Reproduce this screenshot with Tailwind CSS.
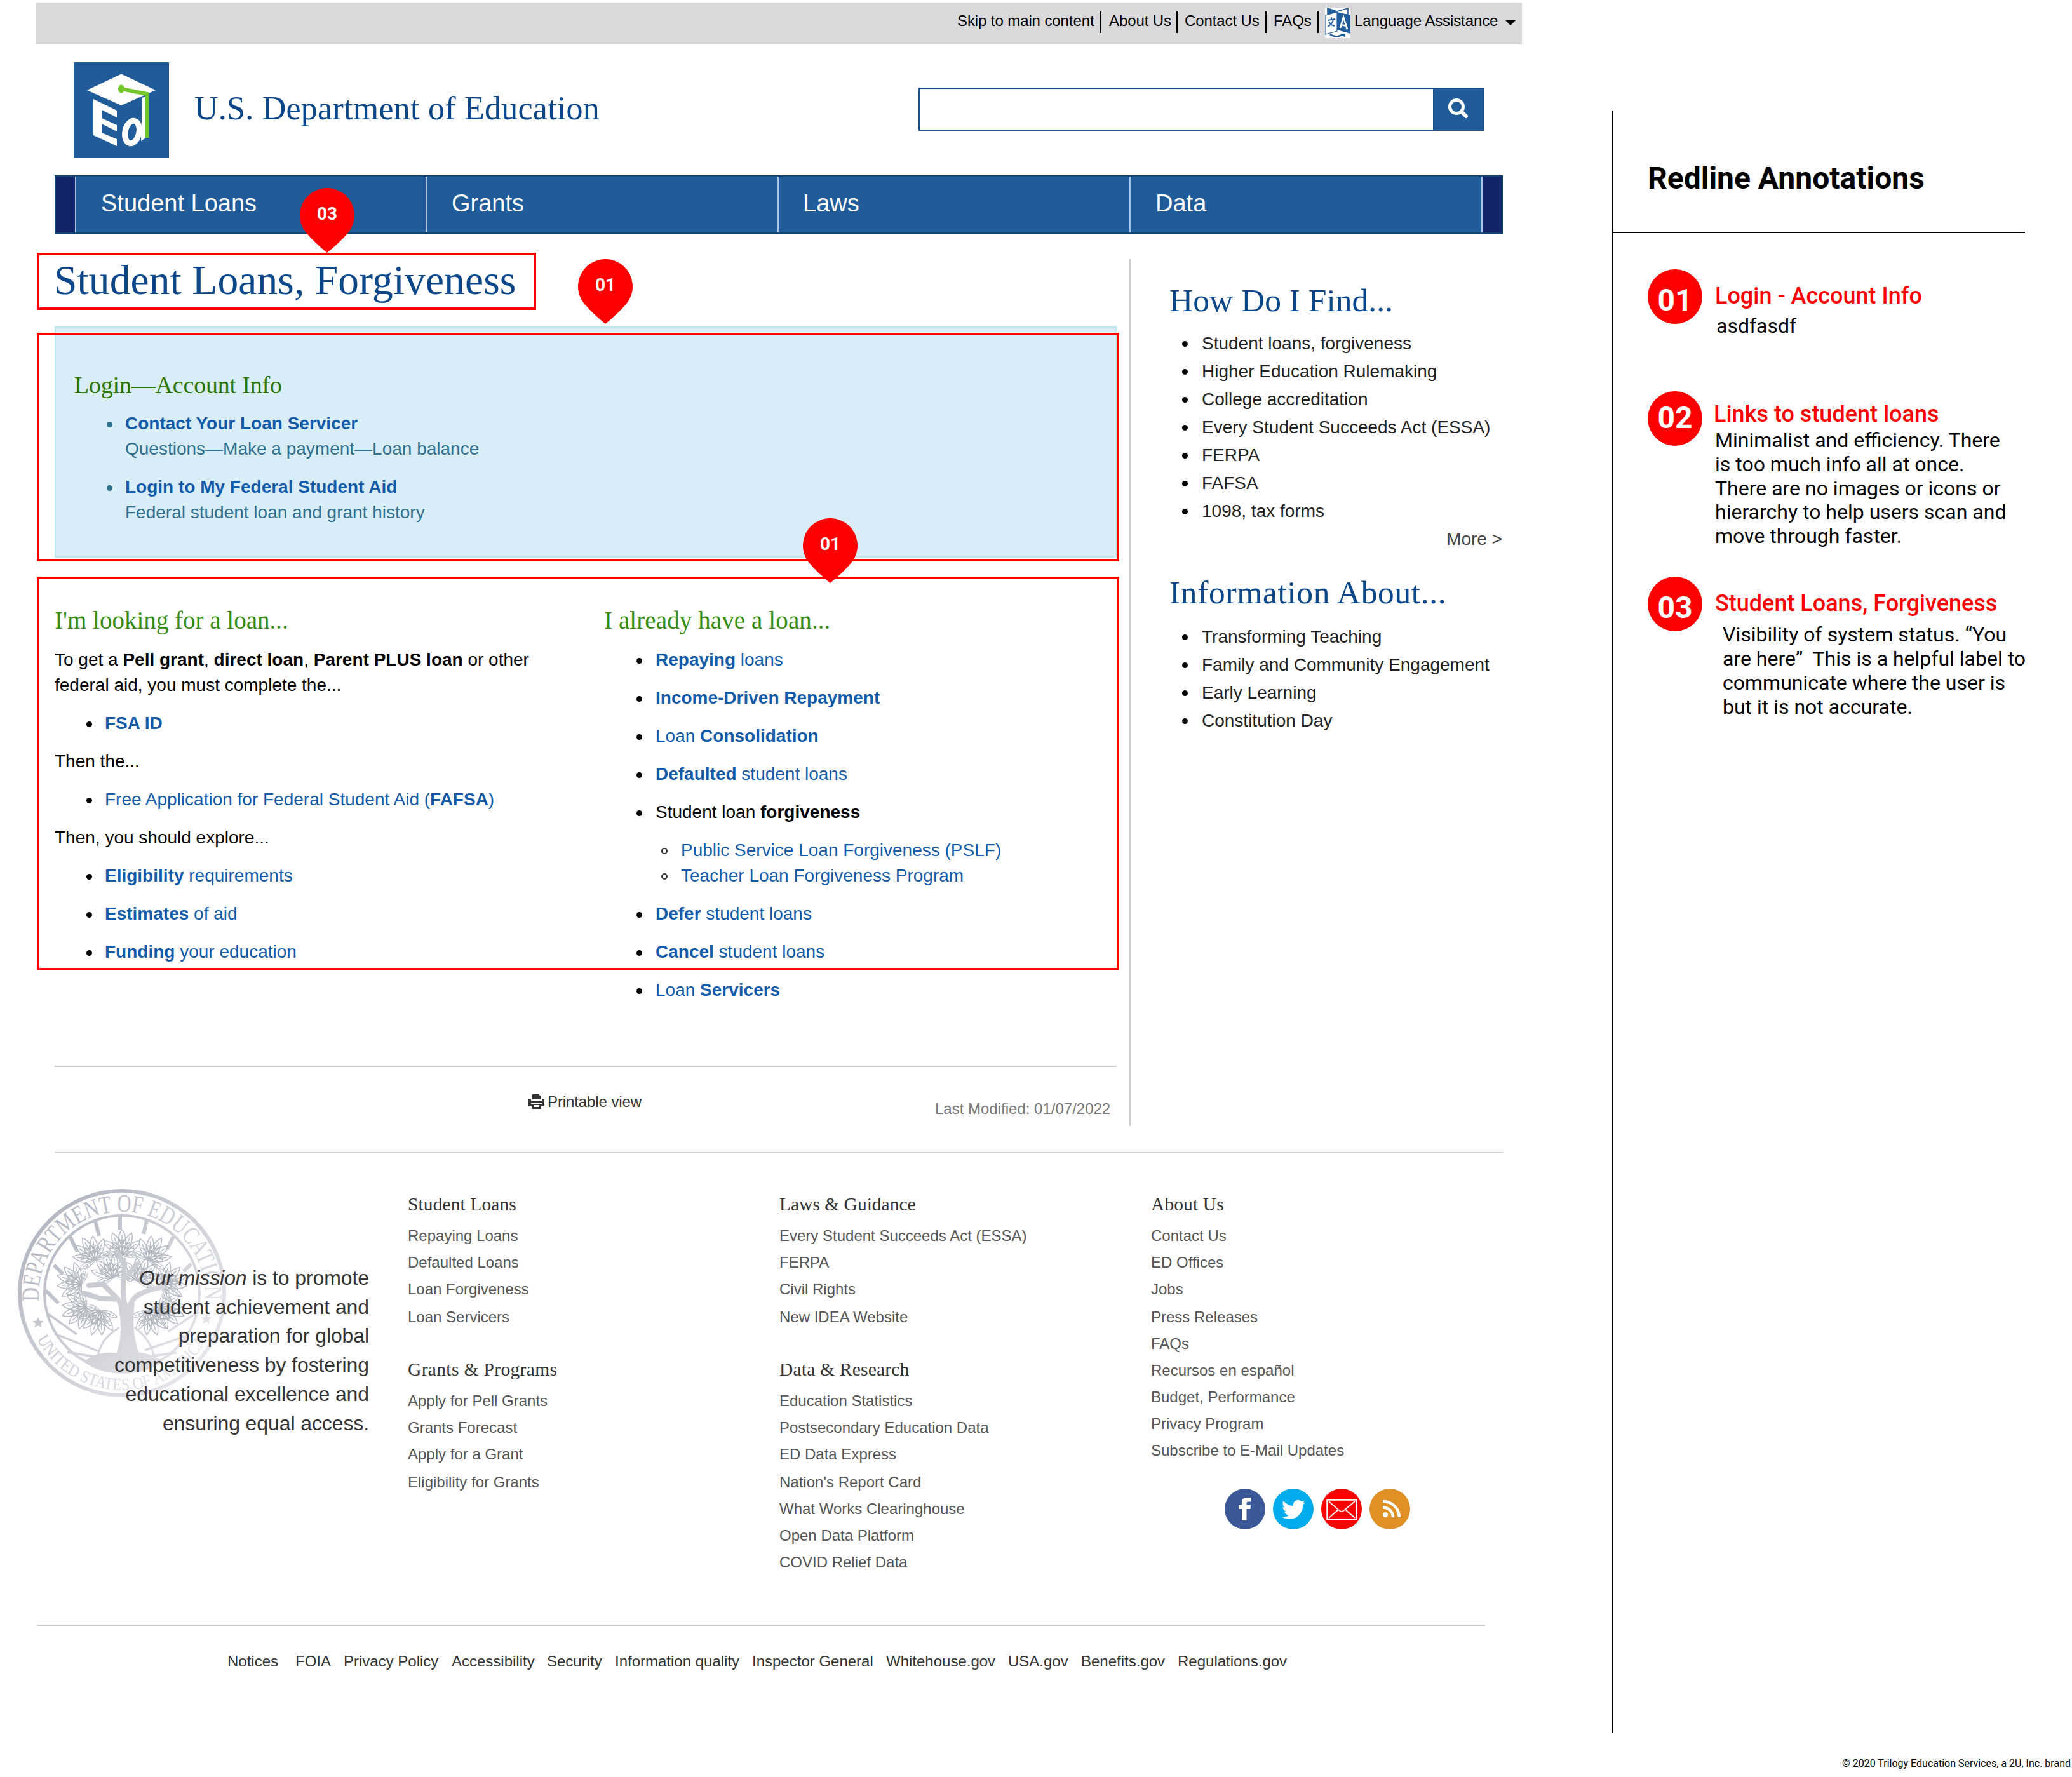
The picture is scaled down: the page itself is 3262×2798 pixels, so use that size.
<!DOCTYPE html>
<html lang="en">
<head>
<meta charset="utf-8">
<title>U.S. Department of Education</title>
<script src="https://cdn.jsdelivr.net/npm/@tailwindcss/browser@4"></script>
</head>
<body class="relative w-[3262px] h-[2798px] overflow-hidden bg-white font-['Liberation_Sans',Arial,sans-serif] text-black">
<div class="flex">
<div class="w-[2420px] shrink-0 pt-1">

  <div class="ml-14 w-[2340px] h-[66px] bg-[#d9d9db] flex items-start text-[24px] leading-[34px] tracking-[-0.1px] pl-[1451px] whitespace-nowrap">
    <a class="mt-3 w-[225px]">Skip to main content</a><span class="mt-[14px] mr-3 w-0.5 h-[34px] bg-black"></span>
    <a class="mt-3 w-[106px]">About Us</a><span class="mt-[14px] mr-[11px] w-0.5 h-[34px] bg-black"></span>
    <a class="mt-3 w-[127px]">Contact Us</a><span class="mt-[14px] mr-[11px] w-0.5 h-[34px] bg-black"></span>
    <a class="mt-3 w-[69px]">FAQs</a><span class="mt-[14px] mr-[10px] w-0.5 h-[34px] bg-black"></span>
    <svg class="mt-2 w-10 h-12 shrink-0" viewBox="0 0 40 48"><rect width="40" height="48" fill="#fff"/><path d="M4 1l15 5 17-5v10H4z" fill="#fff" stroke="#205c9a" stroke-width="1.6"/><path d="M4 1l14 5-6 5H4z" fill="#205c9a"/><path d="M1 12L19 7v30L1 42z" fill="#fff" stroke="#205c9a" stroke-width="1.2"/><path d="M19 7l21 5v29l-21-6z" fill="#205c9a"/><path d="M4 20l12-2M10 15v4M13 19Q11 27 4 30M6 22q3 6 9 7" fill="none" stroke="#205c9a" stroke-width="1.8"/><path d="M24 32l5-17 6 19M26 27l8 2" fill="none" stroke="#fff" stroke-width="2.6"/><path d="M8 42q10 7 20 0" fill="none" stroke="#205c9a" stroke-width="2.6"/><path d="M23 41h9v6z" fill="#205c9a"/></svg>
    <a class="mt-3 ml-[6px] w-[238px]">Language Assistance</a>
    <svg class="mt-7 w-4 h-2" viewBox="0 0 16 8"><path d="M0 0h16L8 8z"/></svg>
  </div>

  <header class="h-[206px] pl-[116px] pt-7 flex items-start">
    <svg class="size-[150px] shrink-0" viewBox="0 0 150 150"><rect width="150" height="150" fill="#205c9a"/><path d="M21 44L75 18.5 129 44 75 68z" fill="#fff"/><path d="M31 58L68 76V87L44 75V88L68 99V109L44 97V111L68 121V132L31 115z" fill="#fff"/><ellipse cx="92" cy="110" rx="11" ry="18" fill="none" stroke="#fff" stroke-width="9" transform="rotate(12 92 110)"/><path d="M108 56L112 54V120L106 124z" fill="#fff"/><path d="M75 42L115.5 50V119" fill="none" stroke="#73c52c" stroke-width="6"/><ellipse cx="75" cy="42" rx="5" ry="6.5" fill="#73c52c"/></svg>
    <div class="ml-[40px] mt-11 w-[1140px] font-['Liberation_Serif',serif] text-[52px] leading-[58px] tracking-[0.25px] text-[#0b4788]">U.S. Department of Education</div>
    <div class="mt-10 flex h-[68px] w-[890px] border-2 border-[#1d5087]">
      <div class="w-[808px] shrink-0 border-t-2 border-[#eee]"></div>
      <div class="flex-1 border-l-2 border-[#1d5087] bg-[#205c9a]"><svg class="size-full" viewBox="0 0 76 64"><circle cx="35" cy="28" r="10.5" fill="none" stroke="#fff" stroke-width="5"/><path d="M43 36l7 7" stroke="#fff" stroke-width="6" stroke-linecap="round"/></svg></div>
    </div>
  </header>

  <nav class="ml-[86px] w-[2280px] h-[92px] border-2 border-[#14446f] bg-[#205c9a] flex text-white text-[38px] leading-[46px]">
    <div class="w-[32px] bg-[#12256b] border-r-2 border-[#a9c4de]"></div>
    <div class="w-[552px] border-r-2 border-[#a9c4de] pl-[39px] pt-[19px]">Student Loans</div>
    <div class="w-[554px] border-r-2 border-[#a9c4de] pl-[39px] pt-[19px]">Grants</div>
    <div class="w-[554px] border-r-2 border-[#a9c4de] pl-[38px] pt-[19px]">Laws</div>
    <div class="w-[554px] border-r-2 border-[#a9c4de] pl-[39px] pt-[19px]">Data</div>
    <div class="w-[30px] bg-[#12256b]"></div>
  </nav>

  <div class="flex h-[1446px] pl-[86px]">
    <main class="w-[1672px] pt-[37px] text-[28px] leading-[40px]">
      <h1 class="-ml-px font-['Liberation_Serif',serif] text-[65.5px] leading-[72px] tracking-[0.1px] text-[#0b4788]">Student Loans, Forgiveness</h1>
      <section class="mt-[37px] h-[364px] border-2 border-[#bce8f1] bg-[#d9edf7] pl-[29px] pt-[70px] text-[#31708f]">
        <h3 class="font-['Liberation_Serif',serif] text-[38px] leading-[40px] tracking-[-0.2px] text-[#2b7500]">Login—Account Info</h3>
        <ul class="mt-[21px] pl-[51px] flex flex-col gap-5">
          <li class="flex gap-5"><i class="mt-[17px] size-[9px] rounded-full bg-[#31708f]"></i><div><b class="text-[#135ba8]">Contact Your Loan Servicer</b><br>Questions—Make a payment—Loan balance</div></li>
          <li class="flex gap-5"><i class="mt-[17px] size-[9px] rounded-full bg-[#31708f]"></i><div><b class="text-[#135ba8]">Login to My Federal Student Aid</b><br>Federal student loan and grant history</div></li>
        </ul>
      </section>
      <div class="mt-[79px] h-[721px] grid grid-cols-[866px_1fr]">
        <div>
          <h3 class="font-['Liberation_Serif',serif] text-[39px] leading-[40px] text-[#388c12]">I'm looking for a loan...</h3>
          <p class="mt-[22px]">To get a <b>Pell grant</b>, <b>direct loan</b>, <b>Parent PLUS loan</b> or other<br>federal aid, you must complete the...</p>
          <ul class="mt-5 pl-[50px] text-[#135ba8]"><li class="flex gap-5"><i class="mt-[17px] size-[9px] rounded-full bg-black"></i><b>FSA ID</b></li></ul>
          <p class="mt-5">Then the...</p>
          <ul class="mt-5 pl-[50px] text-[#135ba8]"><li class="flex gap-5"><i class="mt-[17px] size-[9px] rounded-full bg-black"></i><a>Free Application for Federal Student Aid (<b>FAFSA</b>)</a></li></ul>
          <p class="mt-5">Then, you should explore...</p>
          <ul class="mt-5 pl-[50px] flex flex-col gap-5 text-[#135ba8]">
            <li class="flex gap-5"><i class="mt-[17px] size-[9px] rounded-full bg-black"></i><a><b>Eligibility</b> requirements</a></li>
            <li class="flex gap-5"><i class="mt-[17px] size-[9px] rounded-full bg-black"></i><a><b>Estimates</b> of aid</a></li>
            <li class="flex gap-5"><i class="mt-[17px] size-[9px] rounded-full bg-black"></i><a><b>Funding</b> your education</a></li>
          </ul>
        </div>
        <div>
          <h3 class="-ml-px font-['Liberation_Serif',serif] text-[39px] leading-[40px] tracking-[0.1px] text-[#388c12]">I already have a loan...</h3>
          <ul class="mt-[22px] pl-[50px] flex flex-col gap-5 text-[#135ba8]">
            <li class="flex gap-[21px]"><i class="mt-[17px] size-[9px] rounded-full bg-black"></i><a><b>Repaying</b> loans</a></li>
            <li class="flex gap-[21px]"><i class="mt-[17px] size-[9px] rounded-full bg-black"></i><a><b>Income-Driven Repayment</b></a></li>
            <li class="flex gap-[21px]"><i class="mt-[17px] size-[9px] rounded-full bg-black"></i><a>Loan <b>Consolidation</b></a></li>
            <li class="flex gap-[21px]"><i class="mt-[17px] size-[9px] rounded-full bg-black"></i><a><b>Defaulted</b> student loans</a></li>
            <li class="flex gap-[21px]"><i class="mt-[17px] size-[9px] rounded-full bg-black"></i><div><span class="text-black">Student loan <b>forgiveness</b></span>
              <ul class="mt-5 pl-[9px]">
                <li class="flex gap-[21px]"><i class="mt-[16px] size-[10px] rounded-full border-2 border-[#333]"></i><a>Public Service Loan Forgiveness (PSLF)</a></li>
                <li class="flex gap-[21px]"><i class="mt-[16px] size-[10px] rounded-full border-2 border-[#333]"></i><a>Teacher Loan Forgiveness Program</a></li>
              </ul></div></li>
            <li class="flex gap-[21px]"><i class="mt-[17px] size-[9px] rounded-full bg-black"></i><a><b>Defer</b> student loans</a></li>
            <li class="flex gap-[21px]"><i class="mt-[17px] size-[9px] rounded-full bg-black"></i><a><b>Cancel</b> student loans</a></li>
            <li class="flex gap-[21px]"><i class="mt-[17px] size-[9px] rounded-full bg-black"></i><a>Loan <b>Servicers</b></a></li>
          </ul>
        </div>
      </div>
      <div class="border-t-2 border-[#ccc] flex items-start text-[24px] leading-[34px]">
        <svg class="ml-[746px] mt-[42px] w-[25px] h-6" viewBox="0 0 25 24"><path d="M6 9V1h10l3 3v5z" fill="#333"/><path d="M0 8h4v3h17V8h4v11H0z" fill="#333"/><path d="M4 15.500h17" stroke="#fff" stroke-width="1.500"/><path d="M5 17h15v7H5z" fill="#333"/><path d="M8 18h9v3H8z" fill="#fff"/></svg>
        <span class="ml-[5px] mt-[38px] w-[610px] tracking-[-0.1px] text-[#333]">Printable view</span>
        <span class="mt-[49px] text-[#777]">Last Modified: 01/07/2022</span>
      </div>
    </main>
    <aside class="ml-5 mt-10 h-[1365px] w-[588px] border-l-2 border-[#ccc] pl-[61px] pt-[35px] text-[28px] leading-[44px] text-[#222]">
      <h2 class="font-['Liberation_Serif',serif] text-[51.5px] leading-[60px] text-[#0b4788]">How Do I Find...</h2>
      <ul class="mt-4 pl-5">
        <li class="flex gap-[22px]"><i class="mt-[18px] size-[9px] rounded-full bg-black"></i><a>Student loans, forgiveness</a></li>
        <li class="flex gap-[22px]"><i class="mt-[18px] size-[9px] rounded-full bg-black"></i><a>Higher Education Rulemaking</a></li>
        <li class="flex gap-[22px]"><i class="mt-[18px] size-[9px] rounded-full bg-black"></i><a>College accreditation</a></li>
        <li class="flex gap-[22px]"><i class="mt-[18px] size-[9px] rounded-full bg-black"></i><a>Every Student Succeeds Act (ESSA)</a></li>
        <li class="flex gap-[22px]"><i class="mt-[18px] size-[9px] rounded-full bg-black"></i><a>FERPA</a></li>
        <li class="flex gap-[22px]"><i class="mt-[18px] size-[9px] rounded-full bg-black"></i><a>FAFSA</a></li>
        <li class="flex gap-[22px]"><i class="mt-[18px] size-[9px] rounded-full bg-black"></i><a>1098, tax forms</a></li>
      </ul>
      <div class="text-right pr-[1px] text-[#444]">More &gt;</div>
      <h2 class="mt-8 font-['Liberation_Serif',serif] text-[51.5px] leading-[60px] tracking-[0.65px] text-[#0b4788]">Information About...</h2>
      <ul class="mt-[18px] pl-5">
        <li class="flex gap-[22px]"><i class="mt-[18px] size-[9px] rounded-full bg-black"></i><a>Transforming Teaching</a></li>
        <li class="flex gap-[22px]"><i class="mt-[18px] size-[9px] rounded-full bg-black"></i><a>Family and Community Engagement</a></li>
        <li class="flex gap-[22px]"><i class="mt-[18px] size-[9px] rounded-full bg-black"></i><a>Early Learning</a></li>
        <li class="flex gap-[22px]"><i class="mt-[18px] size-[9px] rounded-full bg-black"></i><a>Constitution Day</a></li>
      </ul>
    </aside>
  </div>

  <footer>
    <div class="ml-[86px] w-[2280px] border-t-2 border-[#ccc]"></div>
    <div class="relative h-[742px] flex">
      <svg class="absolute left-[28px] top-[56px] size-[328px]" viewBox="0 0 328 328">
        <defs>
          <linearGradient id="seal" gradientUnits="userSpaceOnUse" x1="30" y1="60" x2="290" y2="290"><stop offset="0" stop-color="#b3b7c2"/><stop offset=".5" stop-color="#cfd0d8"/><stop offset="1" stop-color="#e8e8ed"/></linearGradient>
          <path id="arcTop" d="M33.4 177A131 131 0 1 1 294.6 177"/>
          <path id="arcBottom" d="M24 224A152 152 0 0 0 304 224"/>
          <g id="leaf"><path d="M0 0C-9-14-7-30 0-40 8-30 8-14 0 0M0-4V-32M0-10l-4-6M0-10l4-6M0-19l-4-6M0-19l4-6"/></g>
          <g id="sprig"><use href="#leaf"/><use href="#leaf" transform="rotate(24) scale(.95)"/><use href="#leaf" transform="rotate(-24) scale(.95)"/><use href="#leaf" transform="rotate(52) scale(.9)"/><use href="#leaf" transform="rotate(-52) scale(.9)"/><use href="#leaf" transform="rotate(90) scale(.7)"/><use href="#leaf" transform="rotate(-90) scale(.7)"/></g>
        </defs>
        <g stroke="url(#seal)" fill="none">
          <circle cx="164" cy="164" r="161" stroke-width="6"/>
          <circle cx="164" cy="164" r="122" stroke-width="4"/>
          <g stroke-width="6"><path d="M161 42v22M122 50l6 24M203 50l-5 21M82 75l12 24M245 75l-10 20M57 120l14 14M273 118l-12 12M44 160l20 20"/></g>
          <g stroke-width="3.500"><path d="M45 195l48 34M58 228l70 28M78 257l48 8M282 195l-46 30M270 230l-70 24M250 258l-46 6"/></g>
          <g stroke-width="1.500">
            <use href="#sprig" transform="translate(164 104)"/><use href="#sprig" transform="translate(122 112) rotate(-30)"/><use href="#sprig" transform="translate(206 112) rotate(30)"/>
            <use href="#sprig" transform="translate(100 150) rotate(-70)"/><use href="#sprig" transform="translate(228 150) rotate(70)"/><use href="#sprig" transform="translate(108 186) rotate(-110)"/><use href="#sprig" transform="translate(224 186) rotate(110)"/>
            <use href="#sprig" transform="translate(130 192) rotate(-160)"/><use href="#sprig" transform="translate(206 192) rotate(160)"/><use href="#sprig" transform="translate(150 140) rotate(-20)"/><use href="#sprig" transform="translate(190 146) rotate(20)"/>
          </g>
          <path d="M126 262c6-24 18-34 34-44M214 262c-6-24-18-34-30-44" stroke-width="3"/>
          <g stroke-width="8" stroke-linecap="round"><path d="M166 250c4-34 2-60-8-76L134 150 112 152M158 174l-30-2-24-8M172 200c4-26 14-34 34-40l22-6M168 180c-4-24-2-44 0-60l-12-22M170 140l18-22"/></g>
        </g>
        <g fill="url(#seal)">
          <path d="M154 262c12-28 8-56 4-82h26c-4 30-2 54 8 82z"/>
          <path d="M104 272c20-16 40-16 60-12 24-6 44-2 64 12-30 24-92 26-124 0z"/>
          <path d="M32 202l2.500 5.500 6 .600-4.500 4 1.300 6-5.300-3-5.300 3 1.300-6-4.500-4 6-.600zM297 196l2.500 5.500 6 .600-4.500 4 1.300 6-5.300-3-5.300 3 1.300-6-4.500-4 6-.600z"/>
          <text class="font-['Liberation_Serif',serif] text-[39px]"><textPath href="#arcTop" textLength="430" lengthAdjust="spacingAndGlyphs">DEPARTMENT OF EDUCATION</textPath></text>
          <text class="font-['Liberation_Serif',serif] text-[27px]"><textPath href="#arcBottom" startOffset="14" textLength="326" lengthAdjust="spacingAndGlyphs">UNITED STATES OF AMERICA</textPath></text>
        </g>
      </svg>
      <p class="relative mt-[174px] w-[581px] h-fit text-right text-[32px] leading-[45.7px] tracking-[-0.1px] text-[#333]"><em>Our mission</em> is to promote<br>student achievement and<br>preparation for global<br>competitiveness by fostering<br>educational excellence and<br>ensuring equal access.</p>
      <div class="ml-[61px] mt-16 grid grid-cols-[585px_585px_540px] text-[24px] leading-[42px] text-[#555]">
        <div>
          <h4 class="font-['Liberation_Serif',serif] text-[29.5px] leading-[32px] tracking-[0.1px] text-[#333]">Student Loans</h4>
          <ul class="mt-[13px]"><li>Repaying Loans</li><li>Defaulted Loans</li><li>Loan Forgiveness</li><li class="mt-0.5">Loan Servicers</li></ul>
          <h4 class="mt-[45px] font-['Liberation_Serif',serif] text-[29.5px] leading-[32px] tracking-[0.35px] text-[#333]">Grants &amp; Programs</h4>
          <ul class="mt-[13px]"><li>Apply for Pell Grants</li><li>Grants Forecast</li><li>Apply for a Grant</li><li class="mt-0.5">Eligibility for Grants</li></ul>
        </div>
        <div>
          <h4 class="font-['Liberation_Serif',serif] text-[29.5px] leading-[32px] text-[#333]">Laws &amp; Guidance</h4>
          <ul class="mt-[13px]"><li>Every Student Succeeds Act (ESSA)</li><li>FERPA</li><li>Civil Rights</li><li class="mt-0.5">New IDEA Website</li></ul>
          <h4 class="mt-[45px] font-['Liberation_Serif',serif] text-[29.5px] leading-[32px] tracking-[0.2px] text-[#333]">Data &amp; Research</h4>
          <ul class="mt-[13px]"><li>Education Statistics</li><li>Postsecondary Education Data</li><li>ED Data Express</li><li class="mt-0.5">Nation's Report Card</li><li>What Works Clearinghouse</li><li>Open Data Platform</li><li>COVID Relief Data</li></ul>
        </div>
        <div>
          <h4 class="font-['Liberation_Serif',serif] text-[29.5px] leading-[32px] tracking-[0.1px] text-[#333]">About Us</h4>
          <ul class="mt-[13px]"><li>Contact Us</li><li>ED Offices</li><li>Jobs</li><li class="mt-0.5">Press Releases</li><li>FAQs</li><li>Recursos en español</li><li>Budget, Performance</li><li>Privacy Program</li><li>Subscribe to E-Mail Updates</li></ul>
          <div class="mt-[39px] ml-[116px] flex gap-3">
            <svg class="size-16" viewBox="0 0 64 64"><circle cx="32" cy="32" r="32" fill="#3b5998"/><path d="M27 50V32H22V25.500H27V21C27 16 30 14 35 14H41.500V20.500H37.500C35 20.500 34.500 21.500 34.500 23.500V25.500H41L40.500 32H34.500V50Z" fill="#fff"/></svg>
            <svg class="size-16" viewBox="0 0 64 64"><circle cx="32" cy="32" r="32" fill="#00acee"/><path transform="translate(14 14.500) scale(1.540)" d="M23.953 4.570a10 10 0 01-2.825.775 4.958 4.958 0 002.163-2.723c-.951.555-2.005.959-3.127 1.184a4.920 4.920 0 00-8.384 4.482C7.690 8.095 4.067 6.130 1.640 3.162a4.822 4.822 0 00-.666 2.475c0 1.710.870 3.213 2.188 4.096a4.904 4.904 0 01-2.228-.616v.060a4.923 4.923 0 003.946 4.827 4.996 4.996 0 01-2.212.085 4.936 4.936 0 004.604 3.417 9.867 9.867 0 01-6.102 2.105c-.390 0-.779-.023-1.170-.067a13.995 13.995 0 007.557 2.209c9.053 0 13.998-7.496 13.998-13.985 0-.210 0-.420-.015-.630A9.935 9.935 0 0024 4.590z" fill="#fff"/></svg>
            <svg class="size-16" viewBox="0 0 64 64"><circle cx="32" cy="32" r="32" fill="#f00"/><path d="M9.500 17.500h46v31h-46z" fill="none" stroke="#fff" stroke-width="2.400"/><path d="M12 20l16 14q4 4 8 0L53 20M12 46l15-13M53 46L38 33" fill="none" stroke="#fff" stroke-width="1.700"/></svg>
            <svg class="size-16" viewBox="0 0 64 64"><circle cx="32" cy="32" r="32" fill="#df9126"/><circle cx="25" cy="41" r="4" fill="#fff"/><path d="M21 29.500A15.500 15.500 0 0 1 37 45M21 20A25.500 25.500 0 0 1 47 45" fill="none" stroke="#fff" stroke-width="4.500"/></svg>
          </div>
        </div>
      </div>
    </div>
    <div class="ml-[58px] w-[2280px] border-t-2 border-[#ccc]"></div>
    <div class="mt-10 pl-[358px] flex whitespace-nowrap text-[24px] leading-[32px] text-[#333]">
      <span class="w-[107px]">Notices</span><span class="w-[76px]">FOIA</span><span class="w-[170px]">Privacy Policy</span><span class="w-[150px]">Accessibility</span><span class="w-[107px]">Security</span><span class="w-[216px]">Information quality</span><span class="w-[211px]">Inspector General</span><span class="w-[192px]">Whitehouse.gov</span><span class="w-[115px]">USA.gov</span><span class="w-[152px]">Benefits.gov</span><span>Regulations.gov</span>
    </div>
  </footer>
</div>

<aside class="ml-[118px] mt-[174px] w-[724px] font-['Roboto',sans-serif]">
  <div class="h-[2554px] border-l-2 border-black">
    <div class="h-[193px] w-[648px] border-b-2 border-black pl-[54px] pt-[79px] text-[48px] leading-[56px] font-bold">Redline Annotations</div>
    <div class="mt-[57px] pl-[54px] h-[192px] flex gap-5">
      <div class="size-[86px] shrink-0 rounded-full bg-[#f00] text-white text-[48px] leading-[56px] font-bold text-center pt-[21px]">01</div>
      <div class="pt-[21px]"><h3 class="text-[36px] leading-[42px] font-medium text-[#f00]">Login - Account Info</h3><p class="mt-2 pl-[2px] text-[32px] leading-[37.6px]">asdfasdf</p></div>
    </div>
    <div class="pl-[54px] h-[292px] flex gap-[18px]">
      <div class="size-[86px] shrink-0 rounded-full bg-[#f00] text-white text-[48px] leading-[56px] font-bold text-center pt-[14px]">02</div>
      <div class="pt-[15px]"><h3 class="text-[36px] leading-[42px] font-medium text-[#f00]">Links to student loans</h3><p class="mt-[2px] pl-[2px] text-[32px] leading-[37.8px] whitespace-nowrap">Minimalist and efficiency. There<br>is too much info all at once.<br>There are no images or icons or<br>hierarchy to help users scan and<br>move through faster.</p></div>
    </div>
    <div class="pl-[54px] flex gap-5">
      <div class="size-[86px] shrink-0 rounded-full bg-[#f00] text-white text-[48px] leading-[56px] font-bold text-center pt-[21px]">03</div>
      <div class="pt-[21px]"><h3 class="text-[36px] leading-[42px] font-medium text-[#f00]">Student Loans, Forgiveness</h3><p class="mt-[9px] pl-3 text-[32px] leading-[38px] whitespace-nowrap">Visibility of system status. “You<br>are here”&nbsp; This is a helpful label to<br>communicate where the user is<br>but it is not accurate.</p></div>
    </div>
  </div>
  <div class="mt-[39px] text-right pr-[2px] text-[16px] leading-[20px]">© 2020 Trilogy Education Services, a 2U, Inc. brand</div>
</aside>
</div>

<div class="absolute left-[58px] top-[398px] w-[786px] h-[90px] border-4 border-[#f00]"></div>
<div class="absolute left-[58px] top-[524px] w-[1704px] h-[360px] border-4 border-[#f00]"></div>
<div class="absolute left-[58px] top-[908px] w-[1704px] h-[620px] border-4 border-[#f00]"></div>
<div class="absolute left-[472px] top-[296px] w-[86px] h-[102px] text-white font-['Roboto',sans-serif] font-bold text-[28px] leading-[32px] text-center pt-[25px]"><svg class="absolute inset-0" viewBox="0 0 86 102"><path d="M9 69.300A43 43 0 1 1 77 69.300Q63 86 43 102 23 86 9 69.300z" fill="#f00"/></svg><span class="relative">03</span></div>
<div class="absolute left-[910px] top-[408px] w-[86px] h-[102px] text-white font-['Roboto',sans-serif] font-bold text-[28px] leading-[32px] text-center pt-[25px]"><svg class="absolute inset-0" viewBox="0 0 86 102"><path d="M9 69.300A43 43 0 1 1 77 69.300Q63 86 43 102 23 86 9 69.300z" fill="#f00"/></svg><span class="relative">01</span></div>
<div class="absolute left-[1264px] top-[816px] w-[86px] h-[102px] text-white font-['Roboto',sans-serif] font-bold text-[28px] leading-[32px] text-center pt-[25px]"><svg class="absolute inset-0" viewBox="0 0 86 102"><path d="M9 69.300A43 43 0 1 1 77 69.300Q63 86 43 102 23 86 9 69.300z" fill="#f00"/></svg><span class="relative">01</span></div>
</body>
</html>
